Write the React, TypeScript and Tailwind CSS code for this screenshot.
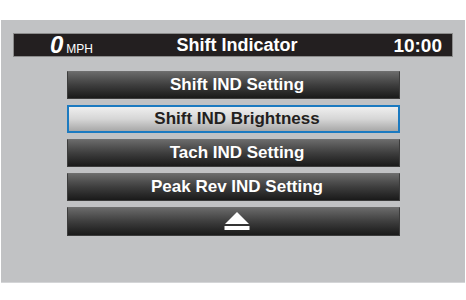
const items = [
  { label: 'Shift IND Setting', selected: false },
  { label: 'Shift IND Brightness', selected: true },
  { label: 'Tach IND Setting', selected: false },
  { label: 'Peak Rev IND Setting', selected: false },
];

function EjectIcon() {
  return (
    <svg width="26" height="19" viewBox="0 0 26 19">
      <polygon points="13,0 25,12 1,12" fill="#ffffff" />
      <rect x="0.5" y="14" width="25" height="4" fill="#ffffff" />
    </svg>
  );
}

export default function App() {
  return (
    <div className="w-[466px] h-[300px] bg-white font-['Liberation_Sans',Arial,sans-serif] overflow-hidden">
      <div className="ml-[1px] mt-[20px] w-[464px] h-[263px] bg-[#c1c2c4] border-b border-[#d4d5d7] flex flex-col">
        {/* status bar */}
        <div className="ml-[12px] mt-[13px] w-[440px] h-[24px] bg-[#231f20] border border-[#8c8c8c] flex items-center text-white font-bold">
          <div className="w-[130px] flex items-baseline pl-[36px]">
            <span className="text-[24px] italic leading-none">0</span>
            <span className="text-[12px] font-normal ml-[3px] leading-none">MPH</span>
          </div>
          <div className="flex-1 text-center pl-[8px] text-[18px] leading-none">Shift Indicator</div>
          <div className="w-[130px] text-right pr-[10px] text-[19px] leading-none">10:00</div>
        </div>

        {/* menu */}
        <div className="ml-[66px] mt-[14px] w-[333px] flex flex-col gap-[6px]">
          {items.map((it) =>
            it.selected ? (
              <div
                key={it.label}
                className="h-[28px] pl-[7px] border-2 border-[#1c7ac0] bg-linear-to-b from-[#efefef] via-[#d6d6d6] to-[#a8a8a8] flex items-center justify-center text-[17px] font-bold text-[#231f20]"
              >
                {it.label}
              </div>
            ) : (
              <div
                key={it.label}
                className="h-[28px] pl-[7px] border border-[#3c3c3c] border-t-[#6e6e6e] bg-linear-to-b from-[#6a6a6a] via-[#3e3e3e] to-[#1a1a1a] flex items-center justify-center text-[17px] font-bold text-white"
              >
                {it.label}
              </div>
            )
          )}
          <div className="h-[29px] pl-[7px] border border-[#3c3c3c] border-t-[#6e6e6e] bg-linear-to-b from-[#6a6a6a] via-[#3e3e3e] to-[#1a1a1a] flex items-center justify-center">
            <EjectIcon />
          </div>
        </div>
      </div>
    </div>
  );
}
